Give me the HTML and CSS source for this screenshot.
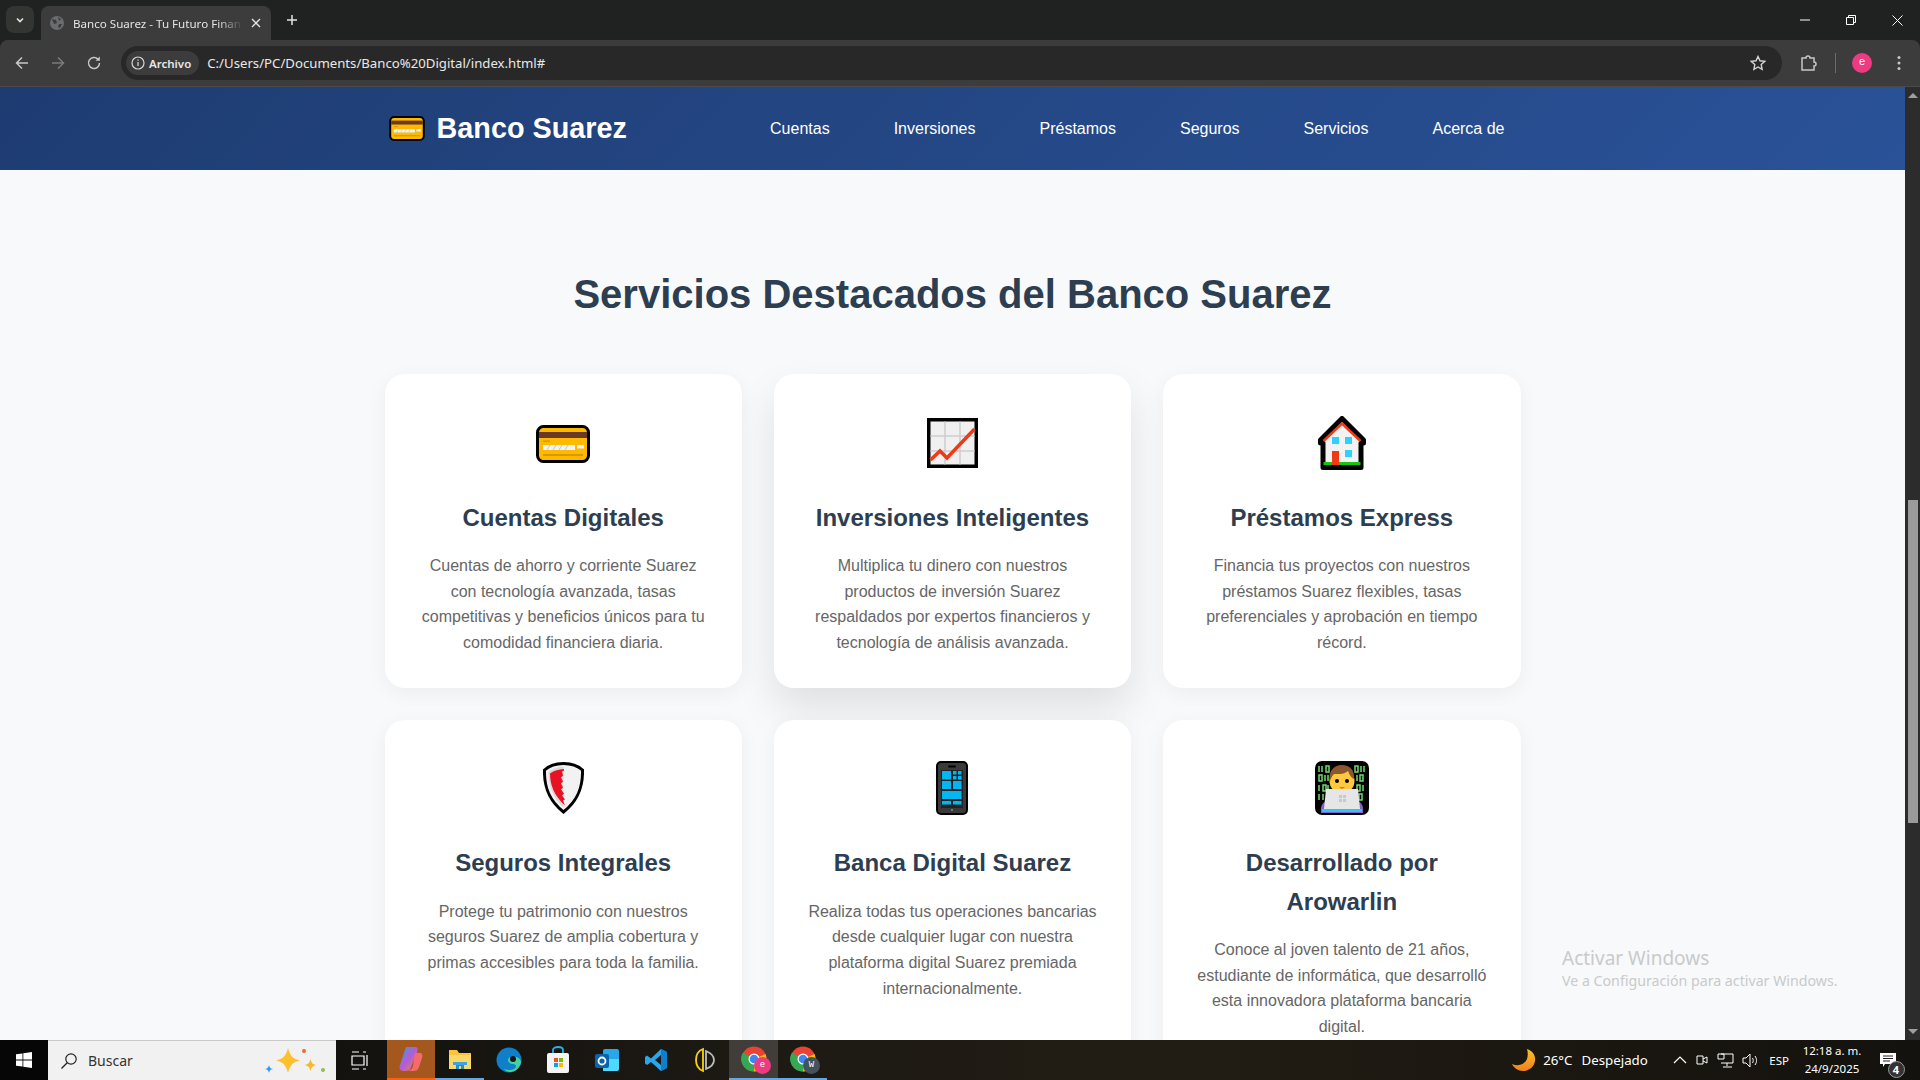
FILE: index.html
```html
<!DOCTYPE html>
<html lang="es">
<head>
  <meta charset="UTF-8" />
  <title>Banco Suarez - Tu Futuro Financiero</title>
  <link rel="stylesheet" href="styles.css">
</head>
<body>
  <svg class="defs" width="0" height="0">
    <symbol id="card" viewBox="0 0 54 38">
      <rect x="1.500" y="1.500" width="51" height="35" rx="6" fill="#ffb900" stroke="#000" stroke-width="3"/>
      <rect x="3" y="7" width="48" height="6" fill="#6b3a22"/>
      <rect x="7" y="15.500" width="7" height="1.500" fill="#d99800"/>
      <rect x="7" y="20" width="32" height="5" fill="#f2f2f2"/>
      <path d="M11 25l3-5M17 25l3-5M23 25l3-5M29 25l3-5" stroke="#a9d8f5" stroke-width="1.200"/>
      <rect x="41" y="20" width="7" height="3.500" fill="#f2f2f2"/>
      <rect x="7" y="29" width="40" height="2" fill="#d99800"/>
    </symbol>
  </svg>

  <div class="tabstrip">
    <div class="tab-menu">
      <svg width="12" height="12" viewBox="0 0 12 12"><path d="M3 4.500l3 3 3-3" fill="none" stroke="#e3e3e3" stroke-width="1.600"/></svg>
    </div>
    <div class="tab">
      <svg class="favicon" width="16" height="16" viewBox="0 0 16 16"><circle cx="8" cy="8" r="7" fill="#6a6d70"/><path d="M3 4l4 1 1 3-3 1zM9 2l3 2-2 2zM10 9l3 0-2 4-2-1z" fill="#3c3c3c"/></svg>
      <span class="tab-title">Banco Suarez - Tu Futuro Finan</span>
      <svg class="tab-close" width="10" height="10" viewBox="0 0 10 10"><path d="M1 1l8 8M9 1l-8 8" stroke="#e3e3e3" stroke-width="1.400"/></svg>
    </div>
    <svg class="new-tab" width="12" height="12" viewBox="0 0 12 12"><path d="M6 1v10M1 6h10" stroke="#e3e3e3" stroke-width="1.500"/></svg>
    <div class="win-controls">
      <span class="win-btn"><svg width="10" height="10" viewBox="0 0 10 10"><path d="M0 5h10" stroke="#fff"/></svg></span>
      <span class="win-btn"><svg width="10" height="10" viewBox="0 0 10 10"><path d="M.5 2.500h7v7h-7zM2.500 2.500v-2h7v7h-2" fill="none" stroke="#fff"/></svg></span>
      <span class="win-btn"><svg width="11" height="11" viewBox="0 0 11 11"><path d="M.5.5l10 10M10.500.5l-10 10" stroke="#fff"/></svg></span>
    </div>
  </div>

  <div class="toolbar">
    <svg class="tool-icon" width="16" height="16" viewBox="0 0 16 16"><path d="M14 8H2.500M8 2.500L2.500 8 8 13.500" fill="none" stroke="#c7c7c7" stroke-width="1.500"/></svg>
    <svg class="tool-icon" width="16" height="16" viewBox="0 0 16 16"><path d="M2 8h11.500M8 2.500L13.500 8 8 13.500" fill="none" stroke="#7a7a7a" stroke-width="1.500"/></svg>
    <svg class="tool-icon" width="16" height="16" viewBox="0 0 16 16"><path d="M13.500 8a5.500 5.500 0 1 1-1.600-3.900" fill="none" stroke="#c7c7c7" stroke-width="1.500"/><path d="M13.800 1.500v4.300H9.500z" fill="#c7c7c7"/></svg>
    <div class="omnibox">
      <div class="chip">
        <svg width="14" height="14" viewBox="0 0 14 14"><circle cx="7" cy="7" r="6" fill="none" stroke="#d5d5d5" stroke-width="1.200"/><path d="M7 6v4M7 3.500v1.300" stroke="#d5d5d5" stroke-width="1.300"/></svg>
        <span>Archivo</span>
      </div>
      <span class="url">C:/Users/PC/Documents/Banco%20Digital/index.html#</span>
      <svg class="star" width="16" height="16" viewBox="0 0 16 16"><path d="M8 1.500l2 4.300 4.700.6-3.500 3.200.9 4.700L8 12l-4.100 2.300.9-4.700L1.300 6.400 6 5.800z" fill="none" stroke="#d5d5d5" stroke-width="1.400"/></svg>
    </div>
    <svg class="ext" width="18" height="18" viewBox="0 0 18 18"><path d="M2 4h4a2 2 0 0 1 4 0h4v4a2 2 0 0 1 0 4v4H2z" fill="none" stroke="#c7c7c7" stroke-width="1.500"/></svg>
    <span class="tool-sep"></span>
    <span class="avatar">e</span>
    <svg class="kebab" width="4" height="16" viewBox="0 0 4 16"><circle cx="2" cy="2.500" r="1.500" fill="#c7c7c7"/><circle cx="2" cy="8" r="1.500" fill="#c7c7c7"/><circle cx="2" cy="13.500" r="1.500" fill="#c7c7c7"/></svg>
  </div>

  <div class="viewport">
    <div class="page">
      <header class="site-header">
        <div class="header-inner">
          <a class="logo" href="#">
            <svg class="logo-icon" width="36" height="25"><use href="#card"/></svg>
            Banco Suarez
          </a>
          <nav class="nav">
            <a href="#">Cuentas</a>
            <a href="#">Inversiones</a>
            <a href="#">Préstamos</a>
            <a href="#">Seguros</a>
            <a href="#">Servicios</a>
            <a href="#">Acerca de</a>
          </nav>
        </div>
      </header>

      <section class="services">
        <h2 class="section-title">Servicios Destacados del Banco Suarez</h2>
        <div class="grid">
          <article class="service-card">
            <div class="service-icon">
              <svg class="card-glyph" width="54" height="38"><use href="#card"/></svg>
            </div>
            <h3>Cuentas Digitales</h3>
            <p>Cuentas de ahorro y corriente Suarez con tecnología avanzada, tasas competitivas y beneficios únicos para tu comodidad financiera diaria.</p>
          </article>

          <article class="service-card is-hover">
            <div class="service-icon">
              <svg width="51" height="50" viewBox="0 0 51 50">
                <rect x="1.750" y="1.750" width="47.500" height="46.500" fill="#f0f0f0" stroke="#000" stroke-width="3.500"/>
                <path d="M18 3.500v43M33 3.500v43M3.500 18h44M3.500 33h44" stroke="#cdcdcd" stroke-width="1.500"/>
                <path d="M3.500 42l9.500-9 7 7 27.500-29" fill="none" stroke="#f03a17" stroke-width="3.500"/>
              </svg>
            </div>
            <h3>Inversiones Inteligentes</h3>
            <p>Multiplica tu dinero con nuestros productos de inversión Suarez respaldados por expertos financieros y tecnología de análisis avanzada.</p>
          </article>

          <article class="service-card">
            <div class="service-icon">
              <svg width="48" height="54" viewBox="0 0 48 54">
                <path d="M24 2.500L2.500 24v3H5v24.500h38V27h2.500v-3z" fill="#f2f2f2" stroke="#000" stroke-width="5" stroke-linejoin="round"/>
                <path d="M5.500 25L24 7.500 42.500 25" fill="none" stroke="#f03a17" stroke-width="2.500"/>
                <rect x="14" y="21" width="7" height="7" fill="#2fd0fb"/>
                <rect x="27" y="21" width="7" height="7" fill="#2fd0fb"/>
                <rect x="27" y="34" width="7" height="7" fill="#2fd0fb"/>
                <rect x="14" y="35" width="7" height="14" fill="#f03a17"/>
                <path d="M5.500 46H14v3H5.500zM21 46h21.500v3H21z" fill="#16c60c"/>
              </svg>
            </div>
            <h3>Préstamos Express</h3>
            <p>Financia tus proyectos con nuestros préstamos Suarez flexibles, tasas preferenciales y aprobación en tiempo récord.</p>
          </article>

          <article class="service-card">
            <div class="service-icon">
              <svg width="41" height="52" viewBox="0 0 41 52">
                <path d="M20.500 1.500C28 1.500 34 3 39.500 8c.5 18-5 31-19 42C6.500 39 1 26 1.500 8 7 3 13 1.500 20.500 1.500z" fill="#f2f2f2" stroke="#000" stroke-width="3"/>
                <path d="M20.500 5C14 5 10 6.500 5.500 10c0 14 4 25 15 35.500z" fill="#c8c8c8" opacity=".6"/>
                <path d="M21 7c-5 .5-10 1.500-14 4.500 0 11 4 22 15 32l-2-5 2-1-3-4 2-2-3-4 2-2-2-4 2-2-2-4 2-2-1-4 2-1z" fill="#e81224"/>
              </svg>
            </div>
            <h3>Seguros Integrales</h3>
            <p>Protege tu patrimonio con nuestros seguros Suarez de amplia cobertura y primas accesibles para toda la familia.</p>
          </article>

          <article class="service-card">
            <div class="service-icon">
              <svg width="32" height="54" viewBox="0 0 32 54">
                <rect x="0" y="0" width="32" height="54" rx="5" fill="#000"/>
                <rect x="2" y="2" width="28" height="50" rx="3" fill="#3a3a3a"/>
                <rect x="12" y="4.500" width="8" height="2" rx="1" fill="#000"/>
                <rect x="5" y="9" width="22" height="38" fill="#222"/>
                <g fill="#00b7f1">
                  <rect x="6" y="10" width="9" height="8.500"/>
                  <rect x="17" y="10" width="3.500" height="3.500"/>
                  <rect x="22" y="10" width="3.500" height="3.500"/>
                  <rect x="17" y="15" width="3.500" height="3.500"/>
                  <rect x="22" y="15" width="3.500" height="3.500"/>
                  <rect x="6" y="20" width="9" height="8"/>
                  <rect x="17" y="20" width="8.500" height="8"/>
                  <rect x="6" y="30" width="19.500" height="8"/>
                  <rect x="6" y="40" width="9" height="3.500"/>
                  <rect x="17" y="40" width="8.500" height="3.500"/>
                </g>
                <circle cx="16" cy="49" r="1" fill="#8a8a8a"/>
              </svg>
            </div>
            <h3>Banca Digital Suarez</h3>
            <p>Realiza todas tus operaciones bancarias desde cualquier lugar con nuestra plataforma digital Suarez premiada internacionalmente.</p>
          </article>

          <article class="service-card">
            <div class="service-icon">
              <svg width="54" height="54" viewBox="0 0 54 54">
                <rect width="54" height="54" rx="7" fill="#000"/>
                <g fill="none" stroke="#6fdc6f" stroke-width="1.500">
                  <path d="M4 5v6M7 5v6M11 5h3v6h-3zM40 5h3v6h-3zM46 5v6M49 5v6"/>
                  <path d="M4 14h3v6H4zM10 14v6M13 14v6M42 14v6M45 14h3v6h-3z"/>
                  <path d="M4 24v6M8 24h3v6H8zM13 24v6M42 24h3v6h-3zM48 24v6"/>
                  <path d="M4 33v6M8 33v6M44 33h3v6h-3z"/>
                </g>
                <path d="M6 52c-1-8 2-12 9-13h24c7 1 10 5 9 13z" fill="#8661c5"/>
                <circle cx="27" cy="20" r="12.500" fill="#ffc83d"/>
                <path d="M15 20c-2-9 3-16 12-16 8 0 13 6 12 14-4-2-5-6-6-8-4 4-11 3-14 3-2 2-3 4-4 7z" fill="#8e562e"/>
                <circle cx="22" cy="20" r="2" fill="#000"/>
                <circle cx="32" cy="20" r="2" fill="#000"/>
                <path d="M24 26h6l-3 2z" fill="#e8664a"/>
                <path d="M11 28h32l2 20H9z" fill="#e6e6e6"/>
                <rect x="7" y="48" width="40" height="3" fill="#2fc4f5"/>
                <g fill="#c8c8c8"><rect x="24" y="34" width="3" height="3"/><rect x="28" y="34" width="3" height="3"/><rect x="24" y="38" width="3" height="3"/><rect x="28" y="38" width="3" height="3"/></g>
              </svg>
            </div>
            <h3>Desarrollado por Arowarlin</h3>
            <p>Conoce al joven talento de 21 años, estudiante de informática, que desarrolló esta innovadora plataforma bancaria digital.</p>
          </article>
        </div>
      </section>
    </div>

    <div class="scrollbar">
      <span class="arrow-up"></span>
      <div class="scroll-track"><div class="scroll-thumb"></div></div>
      <span class="arrow-down"></span>
    </div>

    <div class="watermark">
      <div class="wm-title">Activar Windows</div>
      <div class="wm-sub">Ve a Configuración para activar Windows.</div>
    </div>
  </div>

  <footer class="taskbar">
    <div class="start">
      <svg width="16" height="16" viewBox="0 0 16 16"><path d="M0 2.300l6.500-.9v6.200H0zM7.300 1.300L16 0v7.600H7.300zM0 8.400h6.500v6.200L0 13.700zM7.300 8.400H16V16l-8.700-1.300z" fill="#fff"/></svg>
    </div>
    <div class="search">
      <svg width="18" height="18" viewBox="0 0 18 18"><circle cx="11" cy="7" r="5.200" fill="none" stroke="#222" stroke-width="1.200"/><path d="M7.200 10.800L1.500 16.500" stroke="#222" stroke-width="1.300"/></svg>
      <span>Buscar</span>
      <svg class="sparkles" width="66" height="34" viewBox="0 0 66 34">
        <path d="M26 4c2 8 5 11 12 12.500-7 1.500-10 4.500-12 12.500-2-8-5-11-12-12.500C21 15 24 12 26 4z" fill="#ffc02e"/>
        <path d="M48.500 15c1 4 2 5 5.500 6-3.500 1-4.500 2-5.500 6-1-4-2-5-5.500-6 3.500-1 4.500-2 5.500-6z" fill="#f8b828"/>
        <path d="M7 21c.8 3 1.200 3.200 4 4-2.800.8-3.200 1-4 4-.8-3-1.200-3.200-4-4 2.800-.8 3.200-1 4-4z" fill="#2f9ae8"/>
        <circle cx="42" cy="7" r="2" fill="#ef6a32"/>
        <circle cx="61" cy="26" r="2" fill="#8cc04a"/>
      </svg>
    </div>
    <div class="task-item task-view">
      <svg width="20" height="20" viewBox="0 0 20 20"><path d="M3 6h12v9H3zM3 2h7M3 19h7M14 2h3M14 19h3M18 5v11" fill="none" stroke="#fff" stroke-width="1.200"/></svg>
    </div>
    <div class="task-item copilot">
      <svg width="24" height="26" viewBox="0 0 24 26"><defs><linearGradient id="cp" x1="0" y1="0" x2="1" y2="1"><stop offset="0" stop-color="#2aa6e8"/><stop offset=".5" stop-color="#b45bd6"/><stop offset="1" stop-color="#f78a3a"/></linearGradient></defs><path d="M7 1h9c3 0 3 2 2 5l-6 15c-1 3-3 4-6 4H4C1 25 0 22 1 19z" fill="url(#cp)"/><path d="M16 7h5c2 0 3 2 2 5l-3 9c-1 3-3 4-6 4h-5c3-1 4-2 5-5z" fill="#f36b6b"/></svg>
    </div>
    <div class="task-item is-open">
      <svg width="24" height="24" viewBox="0 0 24 24"><path d="M1 3h8l2 3h12v16H1z" fill="#f8c53c"/><path d="M1 8h22v14H1z" fill="#fbd768"/><path d="M8 22v-7h8v7h-3v-3h-2v3z" fill="#1f8fd6"/><path d="M5 15h14v3H5z" fill="#3aa5e6"/></svg>
    </div>
    <div class="task-item">
      <svg width="26" height="26" viewBox="0 0 26 26"><circle cx="13" cy="13" r="12.500" fill="#0e7fc8"/><path d="M25 15c-1 6-6 10-11 10-2 0-5-1-6-3 5 2 12 1 12-3 0-1-1-2-3-2-3 0-5-2-5-4 0-1 1-3 3-3 5-1 10 1 10 5z" fill="#43d2a0"/><circle cx="17" cy="12" r="3" fill="#15161a"/></svg>
    </div>
    <div class="task-item">
      <svg width="24" height="28" viewBox="0 0 24 28"><path d="M7 7V4c0-4 10-4 10 0v3" fill="none" stroke="#2bb0e8" stroke-width="1.800"/><rect x="1" y="7" width="22" height="20" rx="2" fill="#f4f4f4"/><rect x="8" y="12" width="4" height="4" fill="#f25022"/><rect x="13" y="12" width="4" height="4" fill="#7fba00"/><rect x="8" y="17" width="4" height="4" fill="#00a4ef"/><rect x="13" y="17" width="4" height="4" fill="#ffb900"/></svg>
    </div>
    <div class="task-item">
      <svg width="26" height="26" viewBox="0 0 26 26"><rect x="9" y="2" width="16" height="20" rx="2" fill="#28a8ea"/><path d="M9 12h16v10a2 2 0 0 1-2 2H9z" fill="#50d9ff"/><rect x="1" y="7" width="14" height="14" rx="2" fill="#0a64ad"/><circle cx="8" cy="14" r="3.500" fill="none" stroke="#fff" stroke-width="1.800"/></svg>
    </div>
    <div class="task-item">
      <svg width="24" height="24" viewBox="0 0 24 24"><path d="M17 1l6 3v16l-6 3-10-9-4 3-2-1.500V9l2-1.500 4 3zm0 6l-6 5 6 5z" fill="#2aa6ec"/><path d="M17 1l6 3v16l-6 3z" fill="#0e7fc8"/></svg>
    </div>
    <div class="task-item">
      <svg width="20" height="26" viewBox="0 0 20 26"><path d="M8 2C3 4 1 8 1 13s2 9 7 11z" fill="none" stroke="#f8d117" stroke-width="1.800"/><path d="M11 4c5 2 8 5 8 9s-3 7-8 9z" fill="none" stroke="#bdbdbd" stroke-width="1.800"/></svg>
    </div>
    <div class="task-item is-open is-active">
      <svg class="chrome" width="26" height="26" viewBox="0 0 26 26"><circle cx="13" cy="13" r="12.500" fill="#ea4335"/><path d="M13 13L2 6.500A12.500 12.500 0 0 0 13 25.500z" fill="#34a853"/><path d="M13 13l11.500-5A12.500 12.500 0 0 1 13 25.500z" fill="#fbbc04"/><circle cx="13" cy="13" r="5.500" fill="#fff"/><circle cx="13" cy="13" r="4.300" fill="#4285f4"/></svg>
      <span class="chrome-badge pink">e</span>
    </div>
    <div class="task-item is-open">
      <svg class="chrome" width="26" height="26" viewBox="0 0 26 26"><circle cx="13" cy="13" r="12.500" fill="#ea4335"/><path d="M13 13L2 6.500A12.500 12.500 0 0 0 13 25.500z" fill="#34a853"/><path d="M13 13l11.500-5A12.500 12.500 0 0 1 13 25.500z" fill="#fbbc04"/><circle cx="13" cy="13" r="5.500" fill="#fff"/><circle cx="13" cy="13" r="4.300" fill="#4285f4"/></svg>
      <span class="chrome-badge slate">W</span>
    </div>

    <div class="tray">
      <svg class="moon" width="24" height="24" viewBox="0 0 24 24"><defs><linearGradient id="mn" x1="0" y1="0" x2="0" y2="1"><stop offset="0" stop-color="#fbc02d"/><stop offset="1" stop-color="#f0801a"/></linearGradient></defs><path d="M15 1c6 2 9 7 8 12-1 6-6 10-12 10-5 0-9-3-11-7 7 3 13 0 15-5 1-3 1-7 0-10z" fill="url(#mn)"/></svg>
      <span class="temp">26°C</span>
      <span class="weather">Despejado</span>
      <svg class="tray-caret" width="14" height="8" viewBox="0 0 14 8"><path d="M1 7l6-6 6 6" fill="none" stroke="#fff" stroke-width="1.200"/></svg>
      <svg class="tray-icon" width="13" height="16" viewBox="0 0 13 16"><path d="M2 4h6v8H2zM8 7l4-2v6l-4-2" fill="none" stroke="#fff"/></svg>
      <svg class="tray-icon" width="17" height="15" viewBox="0 0 17 15"><path d="M4 1h12v9H4M1 1h6v5H1zM10 10v3M6 14h9" fill="none" stroke="#fff"/></svg>
      <svg class="tray-icon" width="17" height="15" viewBox="0 0 17 15"><path d="M1 5h3l4-4v13l-4-4H1zM10.500 5c1 1.500 1 3.500 0 5M13 3c2 3 2 6 0 9" fill="none" stroke="#fff"/></svg>
      <span class="lang">ESP</span>
      <div class="clock">
        <span>12:18 a. m.</span>
        <span>24/9/2025</span>
      </div>
      <div class="notify">
        <svg width="16" height="14" viewBox="0 0 16 14"><path d="M0 0h16v11H5l-2 3v-3H0z" fill="#fff"/><path d="M3 3h10M3 5.500h10M3 8h7" stroke="#222"/></svg>
        <span class="notify-count">4</span>
      </div>
    </div>
  </footer>
</body>
</html>
```

FILE: styles.css
```css
* {
  box-sizing: border-box;
}

html, body {
  height: 100%;
}

body {
  margin: 0;
  height: 1080px;
  overflow: hidden;
  display: flex;
  flex-direction: column;
  font-family: 'Liberation Sans', Arial, sans-serif;
  background: #202221;
}

.defs {
  position: absolute;
}

/* browser frame */
.tabstrip {
  height: 40px;
  flex: none;
  display: flex;
  align-items: flex-end;
  padding-left: 6px;
  background: #202221;
  color: #e3e3e3;
}

.tab-menu {
  width: 28px;
  height: 27px;
  margin-bottom: 7px;
  border-radius: 8px;
  background: #333533;
  display: flex;
  align-items: center;
  justify-content: center;
}

.tab {
  width: 230px;
  height: 34px;
  margin-left: 7px;
  padding: 0 10px 0 8px;
  border-radius: 8px 8px 0 0;
  background: #3c3c3c;
  display: flex;
  align-items: center;
  font: 11.600px 'Noto Sans', sans-serif;
}

.favicon, .tab-close {
  flex: none;
}

.tab-title {
  flex: 1;
  min-width: 0;
  margin: 0 8px 0 8px;
  white-space: nowrap;
  -webkit-mask-image: linear-gradient(to right, #000 85%, transparent);
  mask-image: linear-gradient(to right, #000 85%, transparent);
}

.new-tab {
  margin: 0 0 14px 15px;
}

.win-controls {
  margin-left: auto;
  align-self: stretch;
  display: flex;
}

.win-btn {
  width: 46px;
  display: flex;
  align-items: center;
  justify-content: center;
}

.toolbar {
  height: 47px;
  flex: none;
  display: flex;
  align-items: center;
  padding-left: 14px;
  background: #3c3c3c;
  border-radius: 8px 8px 0 0;
  border-bottom: 1px solid #4a4a4a;
}

.tool-icon {
  margin-right: 20px;
}

.omnibox {
  width: 1661px;
  height: 34px;
  margin-left: -1px;
  padding: 0 16px 0 5px;
  display: flex;
  align-items: center;
  border-radius: 17px;
  background: #282828;
  color: #e8e8e8;
  font: 13.200px 'Noto Sans', sans-serif;
}

.chip {
  height: 24px;
  padding: 0 8px 0 5px;
  display: flex;
  align-items: center;
  gap: 4px;
  border-radius: 12px;
  background: #3c3c3c;
  font-size: 11.500px;
  font-weight: 600;
}

.url {
  margin-left: 8px;
}

.star {
  margin-left: auto;
}

.ext {
  margin-left: 18px;
}

.tool-sep {
  width: 1px;
  height: 20px;
  margin-left: 17px;
  background: #6a6a6a;
}

.avatar {
  width: 20px;
  height: 20px;
  margin-left: 16px;
  border-radius: 50%;
  background: #ec3b83;
  color: #fff;
  font: 11px/19px 'Liberation Mono', monospace;
  text-align: center;
}

.kebab {
  margin-left: 25px;
}

/* page */
.viewport {
  position: relative;
  flex: 1;
  min-height: 0;
  display: flex;
}

.page {
  flex: 1;
  overflow: hidden;
  background: #f8f9fa;
  line-height: 1.6;
}

.site-header {
  height: 83px;
  background: linear-gradient(135deg, #1e3c72, #2a5298);
  color: #fff;
}

.header-inner {
  max-width: 1200px;
  height: 100%;
  margin: 0 auto;
  padding: 0 32px;
  display: flex;
  align-items: center;
  justify-content: space-between;
}

.logo {
  display: flex;
  align-items: center;
  gap: 12px;
  padding-left: 4px;
  color: #fff;
  font-size: 28.800px;
  font-weight: 700;
  text-decoration: none;
}

.logo-icon {
  flex: none;
}

.nav {
  display: flex;
  gap: 32px;
}

.nav a {
  padding: 8px 16px;
  color: #fff;
  font-size: 16px;
  text-decoration: none;
}

.services {
  max-width: 1200px;
  margin: 0 auto;
  padding: 92px 32px 64px;
}

.section-title {
  margin: 0 0 48px;
  color: #2c3e50;
  font-size: 40px;
  font-weight: 700;
  text-align: center;
}

.grid {
  display: grid;
  grid-template-columns: repeat(3, 1fr);
  gap: 32px;
}

.service-card {
  padding: 32px;
  border-radius: 20px;
  background: #fff;
  text-align: center;
  box-shadow: 0 5px 20px rgba(0, 0, 0, 0.05);
}

.service-card.is-hover {
  box-shadow: 0 20px 40px rgba(0, 0, 0, 0.1);
}

.service-icon {
  height: 76.800px;
  margin-bottom: 16px;
  display: flex;
  align-items: center;
  justify-content: center;
}

.service-icon svg {
  margin-bottom: 3px;
}

.service-icon .card-glyph {
  margin-bottom: 0;
}

.service-card h3 {
  margin: 0 0 16px;
  color: #2c3e50;
  font-size: 24px;
  font-weight: 700;
}

.service-card p {
  margin: 0;
  color: #666;
  font-size: 16px;
}

.scrollbar {
  width: 15px;
  flex: none;
  display: flex;
  flex-direction: column;
  align-items: center;
  background: #2c2c2c;
}

.arrow-up, .arrow-down {
  width: 0;
  height: 0;
  flex: none;
  border-left: 5px solid transparent;
  border-right: 5px solid transparent;
}

.arrow-up {
  margin-top: 6px;
  border-bottom: 5px solid #9f9f9f;
}

.arrow-down {
  margin-bottom: 6px;
  border-top: 5px solid #9f9f9f;
}

.scroll-track {
  flex: 1;
  width: 100%;
  padding: 402px 2px 0 3px;
}

.scroll-thumb {
  height: 323px;
  background: #9b9b9b;
}

.watermark {
  position: absolute;
  left: 1562px;
  top: 858px;
  color: #c9cacb;
  font-family: 'Noto Sans', sans-serif;
}

.wm-title {
  font-size: 19px;
  line-height: 26px;
}

.wm-sub {
  font-size: 14.200px;
  line-height: 20px;
}

/* windows taskbar */
.taskbar {
  height: 40px;
  flex: none;
  display: flex;
  align-items: stretch;
  background: linear-gradient(90deg, #0d0c0a, #1d1a14 40%, #221d14 60%, #14120e);
  color: #fff;
  font-family: 'Noto Sans', sans-serif;
}

.start {
  width: 48px;
  display: flex;
  align-items: center;
  justify-content: center;
  background: #060606;
}

.search {
  width: 288px;
  padding-left: 12px;
  display: flex;
  align-items: center;
  gap: 10px;
  background: #f1f1f1;
  border-top: 1px solid #c9c9c9;
  color: #333;
  font-size: 14px;
}

.sparkles {
  margin-left: auto;
  margin-right: 8px;
}

.task-item {
  position: relative;
  width: 49px;
  display: flex;
  align-items: center;
  justify-content: center;
}

.task-view {
  width: 51px;
  padding-right: 5px;
}

.copilot {
  width: 48px;
  background: #a5581d;
  border-bottom: 2px solid #f7630c;
}

.is-open {
  border-bottom: 2px solid #63a8e6;
}

.is-active {
  background: rgba(255, 255, 255, 0.16);
}

.chrome-badge {
  position: absolute;
  left: 25px;
  top: 17px;
  width: 17px;
  height: 17px;
  border-radius: 50%;
  color: #fff;
  font: 9px/17px 'Liberation Mono', monospace;
  text-align: center;
}

.pink {
  background: #ec3b83;
}

.slate {
  background: #44525e;
}

.tray {
  margin-left: auto;
  display: flex;
  align-items: center;
  font-size: 13.300px;
}

.moon {
  margin-right: -2px;
}

.temp {
  margin-left: 9px;
}

.weather {
  margin-left: 9px;
}

.tray-caret {
  margin-left: 25px;
}

.tray-icon {
  margin-left: 8.500px;
}

.lang {
  margin-left: 10px;
  font-size: 11.500px;
}

.clock {
  width: 66px;
  margin-left: 10px;
  display: flex;
  flex-direction: column;
  align-items: center;
  font-size: 11.500px;
  line-height: 18px;
}

.notify {
  position: relative;
  width: 44px;
  margin-left: 0.500px;
  margin-right: 10.500px;
  display: flex;
  align-items: center;
  justify-content: center;
}

.notify-count {
  position: absolute;
  left: 22px;
  top: 8px;
  width: 17px;
  height: 17px;
  border: 1px solid #9a9a9a;
  border-radius: 50%;
  background: #333;
  font-size: 11px;
  font-weight: 700;
  line-height: 15px;
  text-align: center;
}
```
